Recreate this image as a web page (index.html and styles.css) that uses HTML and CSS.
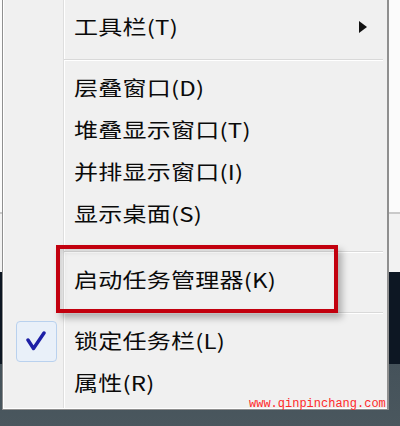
FILE: index.html
```html
<!DOCTYPE html>
<html>
  <head>
    <meta charset="utf-8">
    <title>任务栏菜单</title>
    <link rel="stylesheet" href="styles.css">
  </head>
  <body>

    <div class="desktop">
      <div class="menu">
        <div class="item">
          <span class="icon"></span>
          <span class="label">工具栏(T)</span>
          <span class="arrow"></span>
        </div>

        <div class="sep"></div>

        <div class="item">
          <span class="icon"></span>
          <span class="label">层叠窗口(D)</span>
        </div>
        <div class="item">
          <span class="icon"></span>
          <span class="label">堆叠显示窗口(T)</span>
        </div>
        <div class="item">
          <span class="icon"></span>
          <span class="label">并排显示窗口(I)</span>
        </div>
        <div class="item">
          <span class="icon"></span>
          <span class="label">显示桌面(S)</span>
        </div>

        <div class="sep wide"></div>

        <div class="item marked">
          <span class="icon"></span>
          <span class="label">启动任务管理器(K)</span>
          <span class="redbox"></span>
        </div>

        <div class="sep"></div>

        <div class="item">
          <span class="icon">
            <span class="check">
              <svg width="22" height="20" viewBox="0 0 22 20">
                <path d="M3 9 L8.5 17.5 L19 2" fill="none" stroke="#1d1fa6" stroke-width="3.4" stroke-linecap="round" stroke-linejoin="round"/>
              </svg>
            </span>
          </span>
          <span class="label">锁定任务栏(L)</span>
        </div>
        <div class="item">
          <span class="icon"></span>
          <span class="label">属性(R)</span>
        </div>

        <div class="watermark">www.qinpinchang.com</div>
      </div>
    </div>

  </body>
</html>
```

FILE: styles.css
```css
body {
  margin: 0;
  font-family: "Noto Sans CJK SC", "Noto Sans", sans-serif;
  color: #0a0a0a;
}

.desktop {
  width: 400px;
  height: 426px;
  padding-left: 2px;
  box-sizing: border-box;
  background:
    linear-gradient(
      #fbfbfb 0px, #fbfbfb 212px,
      #c9c9c9 212px, #c9c9c9 214px,
      #f2f2f2 214px, #f2f2f2 272px,
      #0d1723 272px, #0d1723 364px,
      #45525a 364px, #4a575e 426px
    );
  overflow: hidden;
}

/* the menu itself, top edge is cut off by the shot */
.menu {
  position: relative;
  width: 387px;
  height: 410px;
  box-sizing: border-box;
  padding: 6px 0 4px 0;
  border: 1px solid #8f8f8f;
  border-top: none;
  border-right-width: 2px;
  box-shadow: inset 1px 0 #fff, inset 0 -1px #fff;
  background:
    linear-gradient(to right,
      transparent 60px,
      #dedede 60px, #dedede 61px,
      #ffffff 61px, #ffffff 62px,
      transparent 62px),
    #f0f0f0;
}

.item {
  position: relative;
  display: flex;
  align-items: center;
  height: 42px;
}

.icon {
  width: 60px;
  height: 42px;
  display: flex;
  align-items: center;
  justify-content: center;
}

.label {
  padding-left: 11px;
  font-size: 20px;
  line-height: 42px;
  white-space: nowrap;
  letter-spacing: 0.2px;
  transform: scaleX(1.2);
  transform-origin: 11px 50%;
}

.arrow {
  margin-left: auto;
  margin-right: 20px;
  width: 0;
  height: 0;
  border-left: 8px solid #111;
  border-top: 6px solid transparent;
  border-bottom: 6px solid transparent;
}

.sep {
  height: 0;
  margin: 11px 4px 6px 61px;
  border-top: 1px solid #d9d9d9;
  border-bottom: 1px solid #ffffff;
}

.sep.wide {
  margin-top: 16px;
}

.check {
  width: 41px;
  height: 41px;
  box-sizing: border-box;
  margin-left: 6px;
  border: 1px solid #b9d1ee;
  border-radius: 4px;
  background: #e9f0f9;
  display: flex;
  align-items: center;
  justify-content: center;
}

/* annotation drawn over the menu */
.redbox {
  position: absolute;
  left: 53px;
  top: -14px;
  width: 282px;
  height: 68px;
  box-sizing: border-box;
  border: 4px solid #c2000e;
  box-shadow: 4px 5px 7px rgba(0, 0, 0, 0.28), inset 3px 3px 5px rgba(0, 0, 0, 0.12);
}

.watermark {
  position: absolute;
  left: 246px;
  top: 397px;
  font-family: "Liberation Mono", monospace;
  font-size: 12px;
  line-height: 14px;
  color: #ff2a2a;
}
```
